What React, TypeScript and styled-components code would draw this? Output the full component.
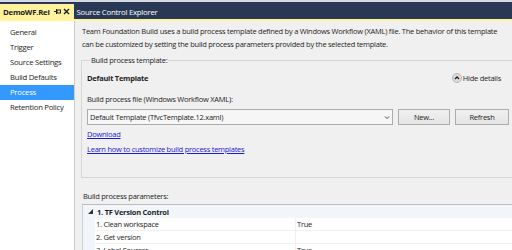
import styled, { createGlobalStyle } from "styled-components";

const GlobalStyle = createGlobalStyle`
  html, body {
    margin: 0;
    padding: 0;
    background: #f0f0f0;
    overflow: hidden;
  }
  body {
    font-family: "Open Sans", "Noto Sans", sans-serif;
    font-size: 7.5px;
    letter-spacing: -0.25px;
    color: #1e1e1e;
  }
`;

const Window = styled.div`
  width: 512px;
  height: 250px;
  display: flex;
  flex-direction: column;
  overflow: hidden;
`;

const TabBar = styled.div`
  height: 17px;
  border-top: 2px solid #d5d9e3;
  background: #293955;
  display: flex;
  align-items: flex-end;
  font-size: 7.8px;
`;

const Tab = styled.div<{ active?: boolean }>`
  height: ${(p) => (p.active ? "15px" : "14px")};
  display: flex;
  align-items: center;
  gap: 4px;
  padding: 0 4px 0 3px;
  background: ${(p) => (p.active ? "#fff29d" : "transparent")};
  color: ${(p) => (p.active ? "#1e1e1e" : "#ffffff")};
  font-weight: ${(p) => (p.active ? "bold" : "normal")};
  white-space: nowrap;
`;

const TabIcons = styled.div`
  display: flex;
  align-items: center;
  gap: 2px;
`;

const AccentLine = styled.div`
  height: 2px;
  background: #fff29d;
`;

const Body = styled.div`
  flex: 1;
  display: flex;
  min-height: 0;
`;

const Sidebar = styled.ul`
  width: 74px;
  margin: 0;
  padding: 4px 0 0;
  list-style: none;
  background: #ffffff;
  border-right: 1px solid #cccccc;
  font-size: 7.7px;
`;

const NavItem = styled.li<{ selected?: boolean }>`
  height: 15px;
  line-height: 15px;
  padding-left: 10px;
  background: ${(p) => (p.selected ? "#3399ff" : "transparent")};
  color: ${(p) => (p.selected ? "#ffffff" : "#1e1e1e")};
  white-space: nowrap;
`;

const Content = styled.div`
  flex: 1;
  min-width: 0;
  padding: 4px 0 0 6px;
  display: flex;
  flex-direction: column;
  & > * {
    flex-shrink: 0;
  }
`;

const Description = styled.p`
  margin: 0 0 0 1px;
  line-height: 13px;
  white-space: nowrap;
`;

const GroupBox = styled.fieldset`
  margin: 4px -4px 0 0;
  padding: 6px 4px 20px 5px;
  border: 1px solid #d5d5d5;
  border-right: none;
  min-width: 0;
`;

const Legend = styled.legend`
  padding: 0 1px;
  margin-left: 3px;
  line-height: 10px;
`;

const HeaderRow = styled.div`
  display: flex;
  justify-content: space-between;
  align-items: center;
  height: 14px;
  padding-right: 11px;
`;

const Title = styled.div`
  font-weight: bold;
`;

const HideDetails = styled.div`
  display: flex;
  align-items: center;
  gap: 1px;
`;

const Label = styled.div`
  margin-top: 8px;
  line-height: 12px;
`;

const FileRow = styled.div`
  display: flex;
  align-items: center;
  gap: 5px;
  margin-top: 4px;
  padding-right: 3px;
`;

const Combo = styled.div`
  flex: 1;
  height: 14px;
  border: 1px solid #acacac;
  background: #f6f6f6;
  display: flex;
  align-items: center;
  justify-content: space-between;
  padding: 0 2px 0 2px;
`;

const Button = styled.div<{ width: number }>`
  width: ${(p) => p.width}px;
  height: 14px;
  border: 1px solid #acacac;
  background: linear-gradient(#f0f0f0, #e5e5e5);
  display: flex;
  align-items: center;
  justify-content: center;
  box-sizing: content-box;
`;

const Link = styled.a`
  display: block;
  color: #1a1ad6;
  text-decoration: underline;
  line-height: 15px;
  width: fit-content;
`;

const Links = styled.div`
  margin-top: 2px;
`;

const ParamsLabel = styled.div`
  margin: 12px 0 0 2px;
  line-height: 12px;
`;

const Grid = styled.div`
  margin: 2px 0 0 1px;
  border-top: 1px solid #bcbcbc;
  border-left: 1px solid #d0d0d0;
  background: #ffffff;
  flex: 1 1 0;
  min-height: 0;
  overflow: hidden;
`;

const Category = styled.div`
  height: 13px;
  display: flex;
  align-items: center;
  gap: 4px;
  padding-left: 5px;
  background: #f2f5fa;
  font-weight: bold;
`;

const Row = styled.div`
  display: grid;
  grid-template-columns: 12px 200px 1fr;
  height: 13px;
  line-height: 12px;
`;

const Gutter = styled.div`
  background: #f2f5fa;
`;

const Cell = styled.div<{ value?: boolean }>`
  border-bottom: 1px solid #f0f0f0;
  border-left: ${(p) => (p.value ? "1px solid #f0f0f0" : "none")};
  padding-left: 1px;
  white-space: nowrap;
`;

const PinIcon = () => (
  <svg width="7" height="7" viewBox="0 0 7 7">
    <path d="M0 3.5h2.5M2.5 1v5" stroke="#1e1e1e" strokeWidth="1" fill="none" />
    <rect x="3" y="2" width="3.5" height="3" fill="none" stroke="#1e1e1e" strokeWidth="1" />
  </svg>
);

const CloseIcon = () => (
  <svg width="7" height="7" viewBox="0 0 7 7">
    <path d="M1 1l5 5M6 1l-5 5" stroke="#1e1e1e" strokeWidth="1.4" />
  </svg>
);

const CollapseIcon = () => (
  <svg width="10" height="10" viewBox="0 0 10 10">
    <circle cx="5" cy="5" r="4.5" fill="#dcdcdc" stroke="#b5b5b5" />
    <path d="M3 6l2-2 2 2" stroke="#1e1e1e" strokeWidth="1.3" fill="none" />
  </svg>
);

const ChevronDown = () => (
  <svg width="6" height="5" viewBox="0 0 6 5">
    <path d="M1 1.5l2 2 2-2" stroke="#444" strokeWidth="1" fill="none" />
  </svg>
);

const Expander = () => (
  <svg width="5" height="5" viewBox="0 0 5 5">
    <path d="M5 0v5H0z" fill="#333" />
  </svg>
);

const navItems = ["General", "Trigger", "Source Settings", "Build Defaults", "Process", "Retention Policy"];

const params = [
  { name: "1. Clean workspace", value: "True" },
  { name: "2. Get version", value: "" },
  { name: "3. Label Sources", value: "True" },
];

export default function App() {
  return (
    <>
      <GlobalStyle />
      <Window>
        <TabBar>
          <Tab active>
            DemoWF.Rel
            <TabIcons>
              <PinIcon />
              <CloseIcon />
            </TabIcons>
          </Tab>
          <Tab>Source Control Explorer</Tab>
        </TabBar>
        <AccentLine />
        <Body>
          <Sidebar>
            {navItems.map((item) => (
              <NavItem key={item} selected={item === "Process"}>
                {item}
              </NavItem>
            ))}
          </Sidebar>
          <Content>
            <Description>
              Team Foundation Build uses a build process template defined by a Windows Workflow (XAML) file. The behavior of this template
              <br />
              can be customized by setting the build process parameters provided by the selected template.
            </Description>
            <GroupBox>
              <Legend>Build process template:</Legend>
              <HeaderRow>
                <Title>Default Template</Title>
                <HideDetails>
                  <CollapseIcon />
                  Hide details
                </HideDetails>
              </HeaderRow>
              <Label>Build process file (Windows Workflow XAML):</Label>
              <FileRow>
                <Combo>
                  Default Template (TfvcTemplate.12.xaml)
                  <ChevronDown />
                </Combo>
                <Button width={50}>New...</Button>
                <Button width={52}>Refresh</Button>
              </FileRow>
              <Links>
                <Link>Download</Link>
                <Link>Learn how to customize build process templates</Link>
              </Links>
            </GroupBox>
            <ParamsLabel>Build process parameters:</ParamsLabel>
            <Grid>
              <Category>
                <Expander />
                1. TF Version Control
              </Category>
              {params.map((p) => (
                <Row key={p.name}>
                  <Gutter />
                  <Cell>{p.name}</Cell>
                  <Cell value>{p.value}</Cell>
                </Row>
              ))}
            </Grid>
          </Content>
        </Body>
      </Window>
    </>
  );
}
